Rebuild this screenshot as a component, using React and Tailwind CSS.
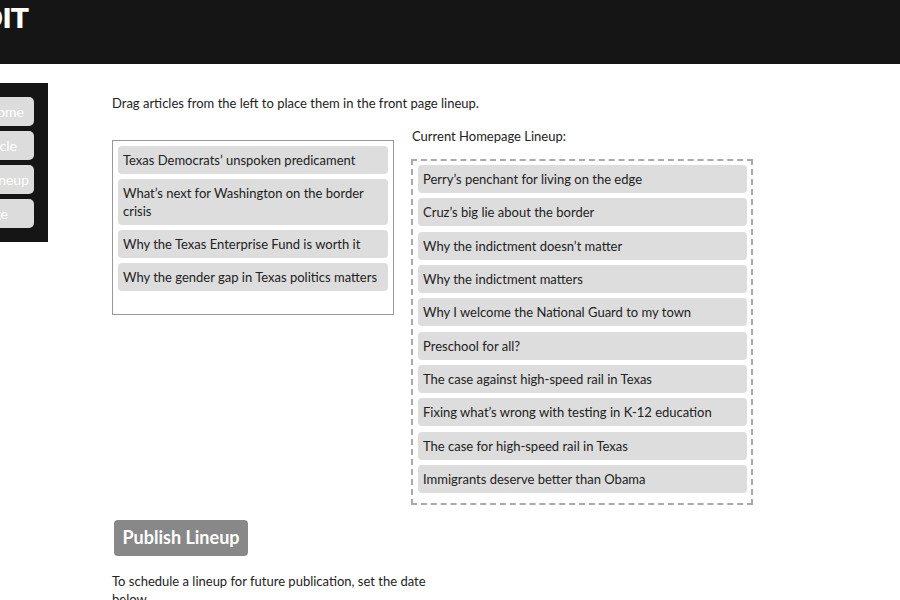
const pool = [
  "Texas Democrats’ unspoken predicament",
  "What’s next for Washington on the border crisis",
  "Why the Texas Enterprise Fund is worth it",
  "Why the gender gap in Texas politics matters",
];

const lineup = [
  "Perry’s penchant for living on the edge",
  "Cruz’s big lie about the border",
  "Why the indictment doesn’t matter",
  "Why the indictment matters",
  "Why I welcome the National Guard to my town",
  "Preschool for all?",
  "The case against high-speed rail in Texas",
  "Fixing what’s wrong with testing in K-12 education",
  "The case for high-speed rail in Texas",
  "Immigrants deserve better than Obama",
];

const nav = [
  { label: "Home", pad: "pr-[10px]" },
  { label: "Article", pad: "pr-[17px]" },
  { label: "Lineup", pad: "pr-[5px]" },
  { label: "Manage", pad: "pr-[26px]" },
];

function Item({ text }) {
  return (
    <div className="bg-[#dddddd] rounded-[4px] px-[5px] py-[5px] leading-[18px] text-[13px] text-[#222]">
      {text}
    </div>
  );
}

export default function App() {
  return (
    <div className="w-[900px] h-[600px] overflow-hidden bg-white font-['Lato',sans-serif] text-[#222]">
      <header className="h-[64px] bg-[#151515] overflow-hidden">
        <div className="-ml-[35px] pt-[2px] text-[26px] font-black text-white leading-[34px] font-['DejaVu_Sans',sans-serif] tracking-[-1px]">
          EDIT
        </div>
      </header>

      <div className="flex">
        <nav className="mt-[19px] -ml-[80px] w-[128px] shrink-0 self-start bg-[#151515] py-[14px] pl-[8px] pr-[14px] flex flex-col gap-[5px]">
          {nav.map((n) => (
            <div
              key={n.label}
              className={`h-[29px] rounded-[5px] bg-[#dcdcdc] text-white text-[14px] flex items-center justify-end ${n.pad}`}
            >
              {n.label}
            </div>
          ))}
        </nav>

        <main className="ml-[64px] pt-[30px] text-[13px]">
          <p className="leading-[18px]">
            Drag articles from the left to place them in the front page lineup.
          </p>

          <div className="flex mt-[15px]">
            <div className="w-[282px] mt-[13px] self-start border border-[#999] p-[5px] pb-[23px] flex flex-col gap-[5px]">
              {pool.map((t) => (
                <Item key={t} text={t} />
              ))}
            </div>

            <div className="ml-[17px]">
              <div className="leading-[18px] pl-[1px]">Current Homepage Lineup:</div>
              <div className="w-[342px] mt-[14px] border-2 border-dashed border-[#aaa] pt-[4px] pb-[10px] pl-[5px] pr-[4px] flex flex-col gap-[5.33px]">
                {lineup.map((t) => (
                  <Item key={t} text={t} />
                ))}
              </div>
            </div>
          </div>

          <button className="mt-[15px] ml-[2px] h-[36px] w-[134px] rounded-[4px] bg-[#888] text-white font-bold text-[18px]">
            Publish Lineup
          </button>

          <p className="mt-[16px] w-[330px] leading-[18px]">
            To schedule a lineup for future publication, set the date below.
          </p>
        </main>
      </div>
    </div>
  );
}
